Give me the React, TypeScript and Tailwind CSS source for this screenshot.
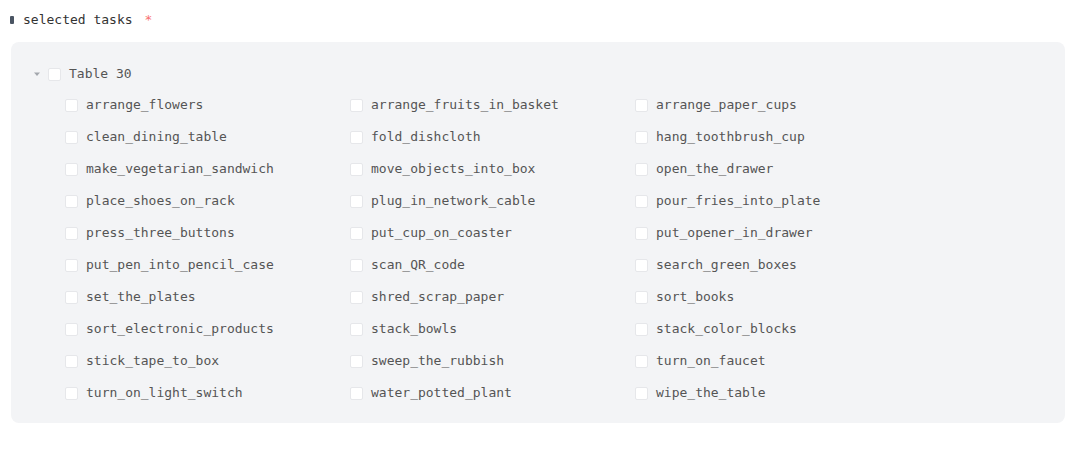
import React from 'react'

const tasks: string[] = [
    'arrange_flowers', 'arrange_fruits_in_basket', 'arrange_paper_cups',
    'clean_dining_table', 'fold_dishcloth', 'hang_toothbrush_cup',
    'make_vegetarian_sandwich', 'move_objects_into_box', 'open_the_drawer',
    'place_shoes_on_rack', 'plug_in_network_cable', 'pour_fries_into_plate',
    'press_three_buttons', 'put_cup_on_coaster', 'put_opener_in_drawer',
    'put_pen_into_pencil_case', 'scan_QR_code', 'search_green_boxes',
    'set_the_plates', 'shred_scrap_paper', 'sort_books',
    'sort_electronic_products', 'stack_bowls', 'stack_color_blocks',
    'stick_tape_to_box', 'sweep_the_rubbish', 'turn_on_faucet',
    'turn_on_light_switch', 'water_potted_plant', 'wipe_the_table',
]

const Box: React.FC = () => (
    <span className="w-[13px] h-[13px] shrink-0 rounded-[2px] bg-white border border-[#e6e7ea]" />
)

export default function App() {
    return (
        <div className="w-[1080px] h-[449px] bg-white font-['DejaVu_Sans_Mono',monospace] text-[13px]">
            {/* Label */}
            <div className="flex items-center h-[40px] pl-[10px]">
                <span className="w-[4px] h-[8px] bg-[#4b5563] rounded-[1px]" />
                <span className="ml-[9px] text-[#333]">selected tasks</span>
                <span className="ml-[12px] text-[#f87171]">*</span>
            </div>

            {/* Tree panel */}
            <div className="ml-[11px] mt-[2px] w-[1054px] h-[381px] rounded-lg bg-[#f3f4f6] pt-[17px]">
                <div className="flex items-center h-[30px] pl-[22px]">
                    <svg width="8" height="6" viewBox="0 0 8 6" className="mr-[7px]">
                        <path d="M1 1.5h6L4 5z" fill="#a3a7ad" />
                    </svg>
                    <Box />
                    <span className="ml-[8px] text-[#555]">Table 30</span>
                </div>
                <div className="grid grid-cols-[285px_285px_285px] pl-[54px]">
                    {tasks.map((t) => (
                        <div key={t} className="flex items-center h-[32px]">
                            <Box />
                            <span className="ml-[8px] text-[#555]">{t}</span>
                        </div>
                    ))}
                </div>
            </div>
        </div>
    )
}
